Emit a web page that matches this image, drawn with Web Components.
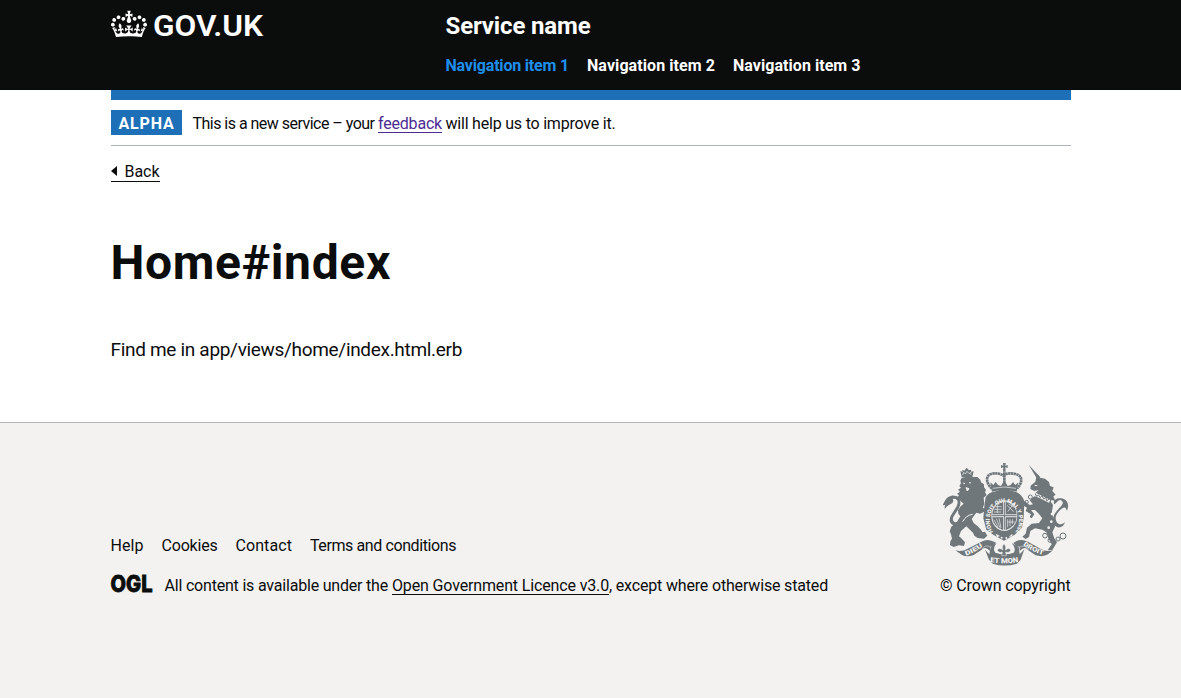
<!DOCTYPE html>
<html lang="en">
<head>
<meta charset="utf-8">
<title>Home#index - GOV.UK</title>
<style>
body{margin:0;background:#f3f2f1;color:#0b0c0c;font:16px/20px Roboto,"Noto Sans",Arial,sans-serif}
</style>
</head>
<body>
<service-page></service-page>
<script>
const define = (name, html, ready) => customElements.define(name, class extends HTMLElement {
  connectedCallback() {
    if (this.shadowRoot) return;
    const t = document.createElement('template');
    t.innerHTML = html;
    this.attachShadow({mode: 'open'}).append(t.content.cloneNode(true));
    if (ready) ready(this, this.shadowRoot);
  }
});

/* A run of text tracked to a given measure in pixels. */
define('text-run', `<style>
:host{display:inline-block;white-space:nowrap;vertical-align:top}
span{white-space:pre}
:host([link]) span{text-decoration:underline;text-decoration-thickness:1px;text-underline-offset:3px;text-decoration-skip-ink:none}
</style><span><slot></slot></span>`, (el, root) => {
  const span = root.querySelector('span');
  const target = parseFloat(el.getAttribute('measure'));
  el.style.width = target + 'px';
  span.style.letterSpacing = '0px';
  const natural = span.getBoundingClientRect().width;
  span.style.letterSpacing = ((target - natural) / el.textContent.length) + 'px';
});

define('gov-logo', `<style>
:host{display:block;width:154px;height:32px}
svg{display:block;overflow:visible}
text{font:600 29.5px Roboto,Arial,sans-serif}
</style>
<svg width="154" height="32" viewBox="0 0 154 32" fill="#fff">
<svg width="36" height="27" viewBox="0 0 132 97" x="0" y="0.6"><path fill-rule="evenodd" d="M25 30.2c3.5 1.5 7.7-.2 9.1-3.7 1.5-3.6-.2-7.8-3.9-9.2-3.6-1.4-7.6.3-9.1 3.9-1.4 3.5.3 7.5 3.9 9zM9 39.5c3.6 1.5 7.8-.2 9.2-3.7 1.5-3.6-.2-7.8-3.9-9.1-3.6-1.5-7.6.2-9.1 3.8-1.4 3.5.3 7.5 3.8 9zM4.4 57.2c3.5 1.5 7.7-.2 9.1-3.8 1.5-3.6-.2-7.7-3.9-9.1-3.5-1.5-7.6.3-9.1 3.8-1.4 3.5.3 7.6 3.9 9.1zm38.3-21.4c3.5 1.5 7.7-.2 9.1-3.8 1.5-3.6-.2-7.7-3.9-9.1-3.6-1.5-7.6.3-9.1 3.8-1.3 3.6.4 7.7 3.9 9.1zm64.4-5.6c-3.6 1.5-7.8-.2-9.1-3.7-1.5-3.6.2-7.8 3.8-9.2 3.6-1.4 7.7.3 9.2 3.9 1.3 3.5-.4 7.5-3.9 9zm15.9 9.3c-3.6 1.5-7.7-.2-9.1-3.7-1.5-3.6.2-7.8 3.7-9.1 3.6-1.5 7.7.2 9.2 3.8 1.5 3.5-.3 7.5-3.8 9zm4.7 17.7c-3.6 1.5-7.8-.2-9.2-3.8-1.5-3.6.2-7.7 3.9-9.1 3.6-1.5 7.7.3 9.2 3.8 1.3 3.5-.4 7.6-3.9 9.1zM89.3 35.8c-3.6 1.5-7.8-.2-9.2-3.8-1.4-3.6.2-7.7 3.9-9.1 3.6-1.5 7.7.3 9.2 3.8 1.4 3.6-.3 7.7-3.9 9.1zM69.7 17.7l8.9 4.7V9.3l-8.9 2.8c-.2-.3-.5-.6-.9-.9L72.4 0H59.6l3.5 11.2c-.3.3-.6.5-.9.9l-8.8-2.8v13.1l8.8-4.7c.3.3.6.7.9.9l-5 15.4v.1c-.2.8-.4 1.6-.4 2.4 0 4.1 3.1 7.5 7 8.1h.2c.3 0 .7.1 1 .1.4 0 .7 0 1-.1h.2c4-.6 7.1-4.1 7.1-8.1 0-.8-.1-1.7-.4-2.4V34l-5.1-15.4c.4-.2.7-.6 1-.9zM66 92.8c16.9 0 32.8 1.1 47.1 3.2 4-16.9 8.9-26.7 14-33.5l-9.6-3.4c1 4.9 1.1 7.2 0 10.2-1.5-1.4-3-4.3-4.2-8.7L108.6 76c2.8-2 5-3.2 7.5-3.3-4.4 9.4-10 11.9-13.6 11.2-4.3-.8-6.3-4.6-5.6-7.9 1-4.7 5.7-5.9 8-.5 4.3-8.7-3-11.4-7.6-8.8 7.1-7.2 7.9-13.5 2.1-21.1-8 6.1-8.1 12.3-4.5 20.8-4.7-5.4-12.1-2.5-9.5 6.2 3.4-5.2 7.9-2 7.2 3.1-.6 4.3-6.4 7.8-13.5 7.2-10.3-.9-10.9-8-11.2-13.8 2.5-.5 7.1 1.8 11 7.3L80.2 60c-4.1 4.4-8 5.3-12.3 5.4 1.4-4.4 8-11.6 8-11.6H55.5s6.4 7.2 7.9 11.6c-4.2-.1-8-1-12.3-5.4l1.4 16.4c3.9-5.5 8.5-7.7 10.9-7.3-.3 5.8-.9 12.8-11.1 13.8-7.2.6-12.9-2.9-13.5-7.2-.7-5 3.8-8.3 7.1-3.1 2.7-8.7-4.6-11.6-9.4-6.2 3.7-8.5 3.6-14.7-4.6-20.8-5.8 7.6-5 13.9 2.2 21.1-4.7-2.6-11.9.1-7.7 8.8 2.3-5.5 7.1-4.2 8.1.5.7 3.3-1.3 7.1-5.7 7.9-3.5.7-9-1.8-13.5-11.2 2.5.1 4.7 1.3 7.5 3.3l-4.7-15.4c-1.2 4.4-2.7 7.2-4.3 8.7-1.1-3-.9-5.3 0-10.2l-9.5 3.4c5 6.9 9.9 16.7 14 33.5 14.8-2.1 30.8-3.2 47.7-3.2z"/></svg>
<text x="42" y="26" textLength="110" lengthAdjust="spacingAndGlyphs">GOV.UK</text>
</svg>`);

define('gov-header', `<style>
:host{display:block;background:#0b0c0c;color:#fff;height:90px}
.in{width:960px;margin:auto;display:grid;grid-template-columns:335px 1fr;padding-top:10px}
.name{font-weight:700;font-size:24px;line-height:30px;display:block;padding-top:1px}
nav{display:flex;gap:18px;font-weight:700;margin-top:15px}
.on{color:#1d8feb}
</style>
<div class="in"><gov-logo></gov-logo><div>
<div class="name"><text-run measure="145">Service name</text-run></div>
<nav><text-run class="on" measure="123.5">Navigation item 1</text-run><text-run measure="128">Navigation item 2</text-run><text-run measure="127.5">Navigation item 3</text-run></nav>
</div></div>`);

define('phase-banner', `<style>
:host{display:flex;border-top:10px solid #1d70b8;border-bottom:1px solid #b1b4b6;padding:10px 0;height:25px}
b{background:#1d70b8;color:#fff;box-sizing:border-box;width:71px;height:25px;padding:3.5px 8px;margin-right:11px}
p{margin:4px 0 0;display:flex;gap:3.5px}
.v{color:#4c2c92}
</style>
<b><text-run measure="56">ALPHA</text-run></b>
<p><text-run measure="182">This is a new service – your</text-run><text-run link class="v" measure="64">feedback</text-run><text-run measure="170">will help us to improve it.</text-run></p>`);

define('back-link', `<style>
:host{display:flex;align-items:center;width:49px;height:19px;padding-top:1px;margin-top:15px;border-bottom:1px solid #0b0c0c}
svg{margin:0 8px 1px 0;flex:none}
text-run{margin-top:1px}
</style><svg width="6" height="10" viewBox="0 0 6 10"><path d="M0 5 6 0V10Z" fill="#0b0c0c"/></svg><text-run measure="35">Back</text-run>`);

define('royal-arms', `<style>:host{display:block;width:125px;height:102px}svg{display:block;overflow:visible}
text{font-family:Roboto,Arial,sans-serif;font-weight:900;fill:#f3f2f1}</style>
<svg width="125" height="102" viewBox="24 24 375 306" fill="#6f777b">
<!-- lion -->
<path d="M80 66l-4-18 7 2-1-6 6 3 7-9 7 8 6-2 1 6 7-1-4 17z"/>
<path d="M83 60l3-8 5 5 5-8 6 7 6-4-1 7" fill="none" stroke="#f3f2f1" stroke-width="2"/>
<path d="M80 68Q98 63 116 66L127 66 136 74 138 82 147 88 147 97 153 104 150 112 155 120 146 128 148 148 143 158 150 162 147 170 136 176 124 173 110 192 116 204 128 214 136 222 143 232 150 230 157 242 147 251 128 249 118 242 114 233 94 214 78 228 72 244 79 250 90 262 87 273 72 271 56 276 45 270 46 259 51 251 48 238 44 229 49 215 66 200 76 184 70 176 69 166 77 154 86 146 79 140 72 133 65 128 72 121 66 116 75 110 69 104 78 98 73 93 78 85 76 77Z"/>
<path d="M84 84l6 2M102 83l6 1M93 98l9 3-5 7z" stroke="#f3f2f1" stroke-width="3" fill="#f3f2f1"/>
<path d="M83 200Q94 180 113 178" fill="none" stroke="#f3f2f1" stroke-width="3"/>
<path d="M67 212C45 211 39 198 48 181L64 155C72 140 67 130 55 131 44 132 39 143 29 150L23 151C29 138 34 125 50 122 74 120 83 139 71 161L56 184C50 195 55 203 68 202Z"/>
<path d="M52 129q8 12-5 18-11 4-18 15-1-18 10-26z"/>
<!-- unicorn -->
<path d="M281 29L316 67 307 73Z"/>
<path d="M304 66l6-6 5 8 15 3 12 10 3 12 11 4-4 11 10 11-7 5 6 14-11-3-5 8-45-20 2-10 9-8-13 3-12-6 1-10 14-12z"/>
<path d="M299 91l8 1" stroke="#f3f2f1" stroke-width="3"/>
<path d="M298 124L346 138 354 150 350 175 358 195 360 215 352 232 358 250 366 262 352 285 338 286 350 268 340 250 334 232 322 224 300 220 286 228 282 246 272 252 262 245 272 236 276 218 290 206 312 204 322 190 310 175 300 165 288 165 298 178 290 190 284 186 288 178 272 168 276 158 258 148 256 140 268 138 284 150 294 148 284 136Z"/>
<path d="M302 118l42 21" fill="none" stroke="#f3f2f1" stroke-width="9"/>
<path d="M300 117l6 7 4-5 6 9 5-6 5 10 6-5 3 10 7-4" fill="none" stroke="#6f777b" stroke-width="3"/>
<g fill="none" stroke="#6f777b" stroke-width="3"><circle cx="286" cy="126" r="6"/><circle cx="275" cy="141" r="5"/><circle cx="330" cy="242" r="7"/><circle cx="345" cy="256" r="6"/><circle cx="369" cy="252" r="6"/><circle cx="384" cy="243" r="9"/></g>
<g fill="#f3f2f1"><circle cx="351" cy="177" r="4"/><circle cx="349" cy="200" r="4"/><circle cx="341" cy="218" r="4"/></g>
<path d="M355 207C350 190 358 174 371 161 381 151 388 144 380 137 371 130 364 146 358 148 352 137 365 128 377 130 396 132 400 145 399 156L396 168C391 151 384 156 372 169 362 180 359 190 365 201 373 213 386 207 390 201 386 218 367 224 355 207Z"/>
<!-- crown -->
<path d="M204 24h8l-1 8 7-2v9l-7-2 1 13h-8l1-13-7 2v-9l7 2z"/>
<path d="M171 101C151 83 151 60 172 56Q191 53 204 61 219 52 242 57C265 63 262 84 246 101" fill="none" stroke="#6f777b" stroke-width="8" stroke-dasharray="7 1.2"/>
<path d="M208 52v33" fill="none" stroke="#6f777b" stroke-width="8" stroke-dasharray="7 1.2"/>
<path d="M166 82l9 8 7-9 7 9 9 3 10-17 10 17 9-3 7-9 7 9 9-8-5 28q-37-10-74 0z"/>
<path d="M173 100q35-8 70 0" fill="none" stroke="#f3f2f1" stroke-width="2"/>
<!-- garter and shield -->
<path d="M152 127q10-16 26-17 30-13 61 0 20 5 29 28l-2 51-5 31-22 19-32 18-31-17-22-16-9-34 3-37z"/>
<ellipse cx="208" cy="182" rx="39" ry="46" fill="#e4e5e5"/>
<path d="M172 178q3-32 32-39v39zM212 139q30 7 33 39h-33zM172 187h32v38q-29-9-32-38zM212 187h33q-3 29-33 38z"/>
<g stroke="#f3f2f1" stroke-width="2" fill="none"><path d="M180 155l20 0M178 163l22 0M177 171l22 0M187 149v25M216 151l20 19M218 170l15-20M221 147l17 10M177 194l12 22M184 191l12 29M192 190l6 28M218 193v24M225 193v20M232 193v14M218 201h21"/><path d="M208 140v84M171 182h74" stroke="#6f777b" stroke-width="3"/></g>
<path id="g1" d="M176 233A44 54 0 1 1 241 232" fill="none"/>
<text font-size="17"><textPath href="#g1" startOffset="3" textLength="228" lengthAdjust="spacingAndGlyphs">HONI SOIT QUI MAL Y PENSE</textPath></text>
<g fill="#f3f2f1"><circle cx="200" cy="248" r="3"/><circle cx="214" cy="249" r="3"/><path d="M182 236l13 7-9 4zM232 236l-11 10 11-2z"/></g>
<!-- ribbon -->
<path d="M61 286Q82 291 98 281L139 260Q157 250 177 260L183 263 175 274 165 275 165 288Q150 271 139 285L116 300Q95 308 80 299Z"/>
<path d="M354 286Q333 292 316 281L279 260Q259 250 241 260L235 264 245 274 254 275 254 288Q269 271 280 286L302 301Q325 307 339 298Z"/>
<path d="M150 284l13 14 4-22 18-12q-14 17-4 29 28 10 55 0 9-13-6-29l21 12 3 22 14-15-11 31-11 12q-38 11-73 0l-11-12z"/>
<path d="M207 266q-8 9-3 19-12-9-17 0 3 10 15 6l-2 11h14l-2-11q13 4 15-6-4-9-16 0 4-10-4-19z" stroke="#f3f2f1" stroke-width="1.5"/>
<path d="M165 276q-14-9-24 7M254 276q16-8 27 9" fill="none" stroke="#f3f2f1" stroke-width="1.5"/>
<path id="r1" d="M93 302Q119 293 151 269" fill="none"/><path id="r2" d="M264 270Q292 291 330 302" fill="none"/><path id="r3" d="M165 321Q208 328 253 321" fill="none"/>
<text font-size="19"><textPath href="#r1" textLength="58" lengthAdjust="spacingAndGlyphs">DIEU</textPath></text>
<text font-size="19"><textPath href="#r2" textLength="67" lengthAdjust="spacingAndGlyphs">DROIT</textPath></text>
<text font-size="21"><textPath href="#r3" textLength="86" lengthAdjust="spacingAndGlyphs">ET MON</textPath></text>
</svg>`);

define('ogl-logo', `<style>:host{display:block;width:42px;height:18px;margin-right:12px}
svg{display:block;overflow:visible}text{font:800 22.5px Inter,Roboto,sans-serif;fill:#0b0c0c;stroke:#0b0c0c;stroke-width:.8}</style>
<svg width="42" height="18" viewBox="0 0 42 18"><text x="-.5" y="17" textLength="42" lengthAdjust="spacingAndGlyphs">OGL</text></svg>`);

define('gov-footer', `<style>
:host{display:block;border-top:1px solid #b1b4b6;background:#f3f2f1;height:275px}
.in{width:960px;margin:auto;padding-top:40.5px;display:flex;justify-content:space-between;align-items:flex-end}
nav{display:flex;gap:18px;margin-bottom:20px}
.lic{display:flex;align-items:flex-start}
.lic p{margin:0;display:flex}
.c{display:flex;flex-direction:column;align-items:flex-end}
royal-arms{margin:-.5px 3px 11px 0}
ogl-logo{margin-top:-1.5px}
</style>
<div class="in"><div>
<nav><text-run measure="33">Help</text-run><text-run measure="56">Cookies</text-run><text-run measure="56.5">Contact</text-run><text-run measure="146">Terms and conditions</text-run></nav>
<div class="lic"><ogl-logo></ogl-logo><p><text-run measure="223.5" style="margin-right:4px">All content is available under the</text-run><text-run link measure="217">Open Government Licence v3.0</text-run><text-run measure="219">, except where otherwise stated</text-run></p></div>
</div><div class="c"><royal-arms></royal-arms><text-run measure="130.5">© Crown copyright</text-run></div></div>`);

define('service-page', `<style>
:host{display:block}
main{background:#fff;height:332px}
.w{width:960px;margin:auto}
h1{font-size:48px;line-height:50px;margin:56px 0 0}
p{font-size:19px;line-height:25px;margin:49px 0 0}
</style>
<gov-header></gov-header>
<main><div class="w"><phase-banner></phase-banner><back-link></back-link>
<h1><text-run measure="280.5">Home#index</text-run></h1>
<p><text-run measure="351.5">Find me in app/views/home/index.html.erb</text-run></p></div></main>
<gov-footer></gov-footer>`);
</script>
</body>
</html>
